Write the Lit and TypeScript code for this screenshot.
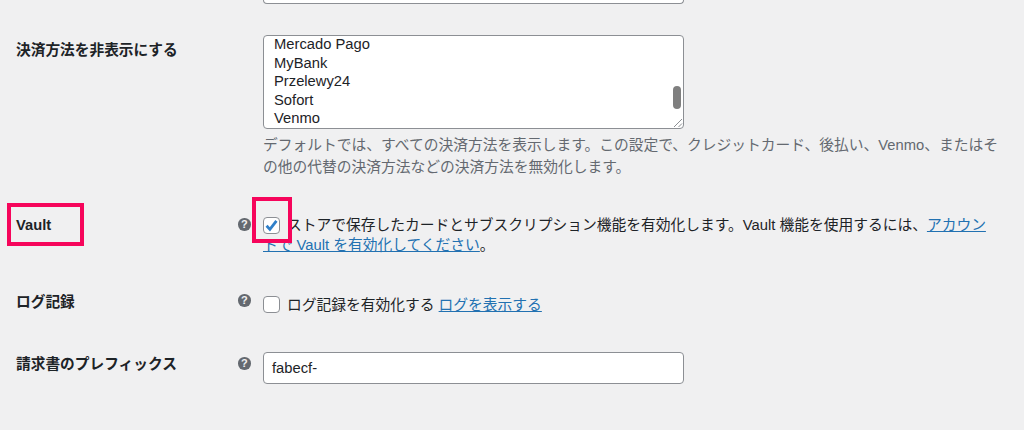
import { LitElement, html, css } from "lit";
import { customElement } from "lit/decorators.js";

const help = html`<span class="help" aria-label="help">?</span>`;

@customElement("app-root")
export class AppRoot extends LitElement {
  static styles = css`
    :host {
      display: block;
      position: relative;
      width: 1024px;
      height: 430px;
      overflow: hidden;
      background: #f0f0f1;
      color: #1d2327;
      font-family: "Liberation Sans", "Noto Sans CJK JP", sans-serif;
      font-size: 14.75px;
    }
    .sliver {
      box-sizing: border-box;
      height: 4px;
      width: 421px;
      margin-left: 263px;
      background: #fff;
      border: 1px solid #8c8f94;
      border-top: none;
      border-radius: 0 0 4px 4px;
    }
    .row {
      display: grid;
      grid-template-columns: 238px 25px 737px;
    }
    .r1 { margin-top: 31px; }
    .r2 { margin-top: 37px; }
    .r3 { margin-top: 37px; }
    .r4 { margin-top: 37px; }
    .label {
      padding-left: 16px;
      font-size: 14.7px;
      font-weight: 700;
      line-height: 20px;
    }
    .r1 .label { padding-top: 5px; }
    .r2 .label { padding-top: 0; }
    .r3 .label { padding-top: 0; }
    .r4 .label { padding-top: 2px; }
    .help {
      display: flex;
      align-items: center;
      justify-content: center;
      width: 12.5px;
      height: 12.5px;
      border-radius: 50%;
      background: #646970;
      color: #f0f0f1;
      font-size: 11px;
      font-weight: 700;
      line-height: 12px;
    }
    .r2 .help { margin-top: 3px; }
    .r3 .help { margin-top: 2px; }
    .r4 .help { margin-top: 5px; }
    .list {
      position: relative;
      box-sizing: border-box;
      width: 421px;
      height: 94px;
      padding: 0 10px;
      background: #fff;
      border: 1px solid #8c8f94;
      border-radius: 4px;
      line-height: 18.5px;
      overflow: hidden;
    }
    .items {
      margin-top: -1px;
    }
    .thumb {
      position: absolute;
      right: 2px;
      top: 50px;
      width: 8px;
      height: 23px;
      border-radius: 4px;
      background: #7f7f7f;
    }
    .grip {
      position: absolute;
      right: 0;
      bottom: 0;
      width: 10px;
      height: 10px;
    }
    .desc {
      margin: 5px 0 0;
      color: #646970;
      line-height: 22px;
    }
    .check-line {
      line-height: 20px;
    }
    .r3 .check-line {
      padding-top: 3px;
    }
    .box {
      display: inline-flex;
      align-items: center;
      justify-content: center;
      box-sizing: border-box;
      width: 17px;
      height: 17px;
      margin-right: 7px;
      vertical-align: -3px;
      background: #fff;
      border: 1px solid #8c8f94;
      border-radius: 4px;
    }
    a {
      color: #2271b1;
      text-decoration: underline;
    }
    .input {
      box-sizing: border-box;
      width: 421px;
      height: 32px;
      padding: 0 8px;
      display: flex;
      align-items: center;
      background: #fff;
      border: 1px solid #8c8f94;
      border-radius: 4px;
    }
    .mark {
      position: absolute;
      box-sizing: border-box;
      border: 4px solid #f6055b;
    }
    .m1 { left: 7px; top: 203px; width: 77px; height: 43px; }
    .m2 { left: 252px; top: 197px; width: 40px; height: 46px; }
  `;

  render() {
    return html`
      <div class="sliver"></div>
      <div class="row r1">
        <div class="label">決済方法を非表示にする</div>
        <div></div>
        <div>
          <div class="list">
            <div class="items">
              <div>Mercado Pago</div>
              <div>MyBank</div>
              <div>Przelewy24</div>
              <div>Sofort</div>
              <div>Venmo</div>
            </div>
            <div class="thumb"></div>
            <svg class="grip" viewBox="0 0 10 10" fill="none" stroke="#8c8f94" stroke-width="1">
              <path d="M1 9 9 1M5.5 9 9 5.5" />
            </svg>
          </div>
          <p class="desc">デフォルトでは、すべての決済方法を表示します。この設定で、クレジットカード、後払い、Venmo、またはその他の代替の決済方法などの決済方法を無効化します。</p>
        </div>
      </div>
      <div class="row r2">
        <div class="label">Vault</div>
        ${help}
        <div class="check-line">
          <span class="box">
            <svg width="15" height="15" viewBox="0 0 14 14" fill="none" stroke="#2f7fc9" stroke-width="2.6">
              <path d="M2.4 7.2 5.5 10.6 11.6 2.6" />
            </svg>
          </span>ストアで保存したカードとサブスクリプション機能を有効化します。Vault 機能を使用するには、<a href="#">アカウントで Vault を有効化してください</a>。
        </div>
      </div>
      <div class="row r3">
        <div class="label">ログ記録</div>
        ${help}
        <div class="check-line"><span class="box"></span>ログ記録を有効化する <a href="#">ログを表示する</a></div>
      </div>
      <div class="row r4">
        <div class="label">請求書のプレフィックス</div>
        ${help}
        <div class="input">fabecf-</div>
      </div>
      <div class="mark m1"></div>
      <div class="mark m2"></div>
    `;
  }
}
